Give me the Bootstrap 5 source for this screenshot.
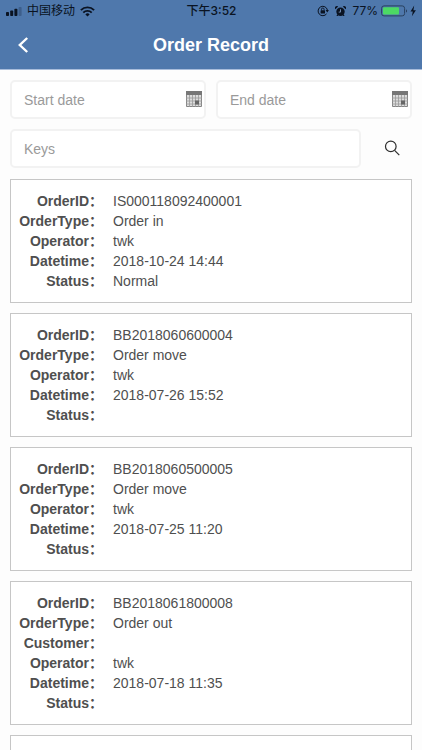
<!DOCTYPE html>
<html lang="en">
<head>
<meta charset="utf-8">
<meta name="viewport" content="width=device-width, initial-scale=1">
<title>Order Record</title>
<link href="https://cdn.jsdelivr.net/npm/bootstrap@5.3.0/dist/css/bootstrap.min.css" rel="stylesheet">
<style>
body { font-family: "Liberation Sans", "Noto Sans CJK SC", sans-serif; font-size: 14px; line-height: 20px; color: #4f4f4f; background: #fdfdfd; overflow-x: hidden; }
.app-header { background: #4f78ac; border-bottom: 1px solid #a9bddb; }
.status-bar { height: 22px; padding: 0 5px 0 6px; font-family: Inter, "Noto Sans CJK SC", sans-serif; font-size: 12px; color: #0a1322; display: grid; grid-template-columns: 1fr auto 1fr; }
.status-side { gap: 5px; }
.status-end { gap: 3px; }
.alarm-icon { margin: 0 3px; }
.title-bar { height: 47px; padding-bottom: 2px; display: grid; grid-template-columns: 48px 1fr 48px; }
.title-bar h1 { font-size: 18px; line-height: 24px; }
.back-btn { color: #fff; height: 40px; padding: 0 0 0 17px; }
.page-body { padding: 10px 10px 0; }
.search-form { gap: 10px; }
.field { height: 39px; padding: 0 12px; font-size: 14px; line-height: 20px; border: 2px solid #f2f2f2; border-radius: 5px; background: #fff; }
.field::placeholder { color: #9a9a9a; opacity: 1; }
.field-date { padding-right: 28px; }
.date-trigger { top: 11px; right: 4px; }
.find-btn { width: 41px; height: 37px; color: #2d2d2d; }
.order-list { gap: 10px; margin-top: 11px; }
.order { border: 1px solid #c6c6c6; border-radius: 0; background: #fff; padding: 11px 8px 11px 0; color: inherit; }
.order dt { flex: 0 0 92px; text-align: right; }
.order dd { padding-left: 10px; }
.order dl > div { height: 20px; }
</style>
<script src="https://cdn.jsdelivr.net/npm/bootstrap@5.3.0/dist/js/bootstrap.bundle.min.js" defer></script>
</head>
<body>
<header class="app-header">
  <div class="status-bar align-items-center">
    <div class="status-side d-flex align-items-center">
      <svg width="16" height="9" viewBox="0 0 16 9" aria-hidden="true"><g fill="#0a1322"><rect y="5" width="3" height="4" rx=".8"/><rect x="4.2" y="3.5" width="3" height="5.5" rx=".8"/><rect x="8.4" y="1.8" width="3" height="7.2" rx=".8"/></g><rect x="12.6" width="3" height="9" rx=".8" fill="#3d5f8c"/></svg>
      <span>中国移动</span>
      <svg width="15" height="11" viewBox="0 0 15 11" fill="none" stroke="#0a1322" stroke-width="1.9" aria-hidden="true"><path d="M.9 4.1a9.4 9.4 0 0 1 13.2 0M3.3 6.6a6 6 0 0 1 8.4 0"/><path d="M7.5 10.6 5.4 8.4a3 3 0 0 1 4.2 0z" fill="#0a1322" stroke="none"/></svg>
    </div>
    <span class="fw-medium">下午3:52</span>
    <div class="status-end d-flex align-items-center justify-content-end">
      <svg width="12" height="12" viewBox="0 0 12 12" aria-hidden="true"><path d="M9.6 8.8A4.7 4.7 0 1 1 10.4 5" fill="none" stroke="#0a1322"/><path d="M8.6 5.1h3.3l-1.6 2.3z" fill="#0a1322"/><rect x="3.6" y="5.3" width="4.4" height="3.2" rx=".5" fill="#0a1322"/><path d="M4.5 5.4V4.3a1.3 1.3 0 0 1 2.6 0v1.1" fill="none" stroke="#0a1322" stroke-width=".9"/></svg>
      <svg class="alarm-icon" width="11" height="11" viewBox="0 0 11 11" aria-hidden="true"><g fill="#0a1322"><circle cx="5.5" cy="5.8" r="4.2"/><path d="M.3 3.2A2 2 0 0 1 3.2.5zM10.7 3.2A2 2 0 0 0 7.8.5z"/><path d="m2.2 8.3-.7 1.6h1.2l.8-.9zM8.8 8.3l.7 1.6H8.3L7.5 9z"/></g><path d="M5.5 3.2v2.9H3.7" fill="none" stroke="#7893b9" stroke-width=".9"/></svg>
      <span>77%</span>
      <svg width="36" height="12" viewBox="0 0 36 12" aria-hidden="true"><rect x=".6" y=".9" width="23" height="10" rx="2.4" fill="none" stroke="#29415f"/><rect x="2" y="2.2" width="16" height="7.4" rx="1" fill="#4cd964"/><path d="M25 4.2c1.4.4 1.4 3 0 3.4z" fill="#29415f"/><path d="M33.2.6 29.5 6.5h2.3l-.9 4.8 4-6.1h-2.5z" fill="#0a1322"/></svg>
    </div>
  </div>
  <nav class="title-bar align-items-center" aria-label="Page">
    <button type="button" class="back-btn btn border-0 d-flex align-items-center" aria-label="Back"><svg width="12" height="16" viewBox="0 0 12 16" fill="none" stroke="currentColor" stroke-width="2.4"><path d="M10.2 1 2.8 8l7.4 7"/></svg></button>
    <h1 class="m-0 fw-bold text-white text-center">Order Record</h1>
  </nav>
</header>

<main class="page-body">
  <form class="search-form d-flex flex-column">
    <div class="search-form d-flex">
      <div class="position-relative flex-fill">
        <input type="text" class="field field-date form-control" placeholder="Start date" aria-label="Start date">
        <button type="button" class="date-trigger btn p-0 border-0 position-absolute d-flex" aria-label="Choose start date"><svg width="16" height="16" viewBox="0 0 16 16"><path d="M.5.5h15v15H.5z" fill="#ddd" stroke="#858585"/><path d="M0 0h16v4H0z" fill="#777"/><path d="M3.5 4v12M6.5 4v12M9.5 4v12M12.5 4v12M0 7h16M0 10h16M0 13h16" stroke="#999" stroke-width=".8"/><path d="M9 9.5h4v4H9z" fill="#666"/></svg></button>
      </div>
      <div class="position-relative flex-fill">
        <input type="text" class="field field-date form-control" placeholder="End date" aria-label="End date">
        <button type="button" class="date-trigger btn p-0 border-0 position-absolute d-flex" aria-label="Choose end date"><svg width="16" height="16" viewBox="0 0 16 16"><path d="M.5.5h15v15H.5z" fill="#ddd" stroke="#858585"/><path d="M0 0h16v4H0z" fill="#777"/><path d="M3.5 4v12M6.5 4v12M9.5 4v12M12.5 4v12M0 7h16M0 10h16M0 13h16" stroke="#999" stroke-width=".8"/><path d="M9 9.5h4v4H9z" fill="#666"/></svg></button>
      </div>
    </div>
    <div class="search-form d-flex">
      <input type="search" class="field form-control" placeholder="Keys" aria-label="Keys">
      <button type="submit" class="find-btn btn p-0 border-0 d-flex align-items-center justify-content-center flex-shrink-0" aria-label="Search"><svg width="16" height="16" viewBox="0 0 16 16" fill="none" stroke="currentColor" stroke-width="1.2"><circle cx="6.8" cy="6.4" r="5.3"/><path d="m10.6 10.3 4.7 4.8"/></svg></button>
    </div>
  </form>

  <section class="order-list d-flex flex-column" aria-label="Orders">
    <article class="order card"><dl class="m-0">
      <div class="d-flex"><dt>OrderID：</dt><dd class="m-0">IS000118092400001</dd></div>
      <div class="d-flex"><dt>OrderType：</dt><dd class="m-0">Order in</dd></div>
      <div class="d-flex"><dt>Operator：</dt><dd class="m-0">twk</dd></div>
      <div class="d-flex"><dt>Datetime：</dt><dd class="m-0">2018-10-24 14:44</dd></div>
      <div class="d-flex"><dt>Status：</dt><dd class="m-0">Normal</dd></div>
    </dl></article>
    <article class="order card"><dl class="m-0">
      <div class="d-flex"><dt>OrderID：</dt><dd class="m-0">BB2018060600004</dd></div>
      <div class="d-flex"><dt>OrderType：</dt><dd class="m-0">Order move</dd></div>
      <div class="d-flex"><dt>Operator：</dt><dd class="m-0">twk</dd></div>
      <div class="d-flex"><dt>Datetime：</dt><dd class="m-0">2018-07-26 15:52</dd></div>
      <div class="d-flex"><dt>Status：</dt><dd class="m-0"></dd></div>
    </dl></article>
    <article class="order card"><dl class="m-0">
      <div class="d-flex"><dt>OrderID：</dt><dd class="m-0">BB2018060500005</dd></div>
      <div class="d-flex"><dt>OrderType：</dt><dd class="m-0">Order move</dd></div>
      <div class="d-flex"><dt>Operator：</dt><dd class="m-0">twk</dd></div>
      <div class="d-flex"><dt>Datetime：</dt><dd class="m-0">2018-07-25 11:20</dd></div>
      <div class="d-flex"><dt>Status：</dt><dd class="m-0"></dd></div>
    </dl></article>
    <article class="order card"><dl class="m-0">
      <div class="d-flex"><dt>OrderID：</dt><dd class="m-0">BB2018061800008</dd></div>
      <div class="d-flex"><dt>OrderType：</dt><dd class="m-0">Order out</dd></div>
      <div class="d-flex"><dt>Customer：</dt><dd class="m-0"></dd></div>
      <div class="d-flex"><dt>Operator：</dt><dd class="m-0">twk</dd></div>
      <div class="d-flex"><dt>Datetime：</dt><dd class="m-0">2018-07-18 11:35</dd></div>
      <div class="d-flex"><dt>Status：</dt><dd class="m-0"></dd></div>
    </dl></article>
    <article class="order card" aria-label="Next order"></article>
  </section>
</main>
</body>
</html>
